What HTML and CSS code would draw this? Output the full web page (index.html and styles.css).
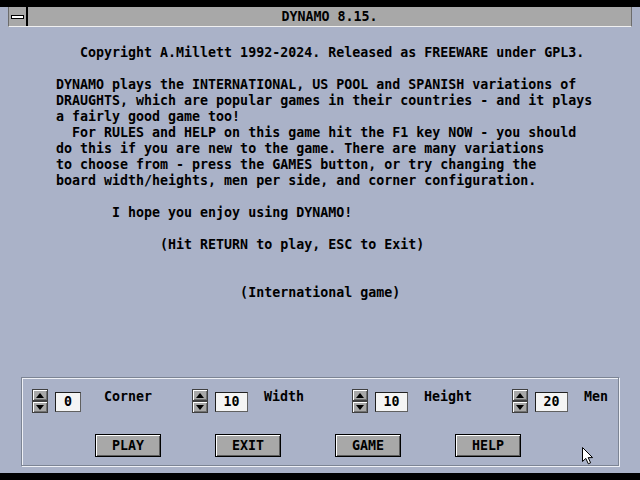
FILE: index.html
```html
<!DOCTYPE html>
<html>
<head>
<meta charset="utf-8">
<link rel="stylesheet" href="styles.css">
</head>
<body>
<div class="screen">
  <div class="titlebar">
    <div class="sysmenu"><span class="sysbar"></span></div>
    <div class="title">DYNAMO 8.15.</div>
  </div>
<pre class="intro">   Copyright A.Millett 1992-2024. Released as FREEWARE under GPL3.

DYNAMO plays the INTERNATIONAL, US POOL and SPANISH variations of
DRAUGHTS, which are popular games in their countries - and it plays
a fairly good game too!
  For RULES and HELP on this game hit the F1 key NOW - you should
do this if you are new to the game. There are many variations
to choose from - press the GAMES button, or try changing the
board width/heights, men per side, and corner configuration.

       I hope you enjoy using DYNAMO!

             (Hit RETURN to play, ESC to Exit)


                       (International game)</pre>
  <div class="panel">
    <div class="controls">
      <div class="ctl">
        <div class="spin">
          <div class="arrow"><svg width="8" height="5" viewBox="0 0 8 5"><path d="M0 5 L4 0 L8 5 Z"/></svg></div>
          <div class="arrow"><svg width="8" height="5" viewBox="0 0 8 5"><path d="M0 0 L8 0 L4 5 Z"/></svg></div>
        </div>
        <div class="val narrow">0</div>
        <span class="lbl">Corner</span>
      </div>
      <div class="ctl">
        <div class="spin">
          <div class="arrow"><svg width="8" height="5" viewBox="0 0 8 5"><path d="M0 5 L4 0 L8 5 Z"/></svg></div>
          <div class="arrow"><svg width="8" height="5" viewBox="0 0 8 5"><path d="M0 0 L8 0 L4 5 Z"/></svg></div>
        </div>
        <div class="val">10</div>
        <span class="lbl">Width</span>
      </div>
      <div class="ctl">
        <div class="spin">
          <div class="arrow"><svg width="8" height="5" viewBox="0 0 8 5"><path d="M0 5 L4 0 L8 5 Z"/></svg></div>
          <div class="arrow"><svg width="8" height="5" viewBox="0 0 8 5"><path d="M0 0 L8 0 L4 5 Z"/></svg></div>
        </div>
        <div class="val">10</div>
        <span class="lbl">Height</span>
      </div>
      <div class="ctl last">
        <div class="spin">
          <div class="arrow"><svg width="8" height="5" viewBox="0 0 8 5"><path d="M0 5 L4 0 L8 5 Z"/></svg></div>
          <div class="arrow"><svg width="8" height="5" viewBox="0 0 8 5"><path d="M0 0 L8 0 L4 5 Z"/></svg></div>
        </div>
        <div class="val">20</div>
        <span class="lbl">Men</span>
      </div>
    </div>
    <div class="buttons">
      <div class="btn">PLAY</div>
      <div class="btn">EXIT</div>
      <div class="btn">GAME</div>
      <div class="btn">HELP</div>
    </div>
  </div>
  <svg class="cursor" width="12" height="18" viewBox="0 0 12 18"><path d="M0.5 0.5 L0.5 14.5 L3.8 11.4 L6.3 16.8 L8.6 15.8 L6.2 10.6 L10.6 10.6 Z" fill="#fff" stroke="#000" stroke-width="1"/></svg>
</div>
</body>
</html>
```

FILE: styles.css
```css
html, body {
  margin: 0;
  padding: 0;
  background: #000;
  height: 480px;
  overflow: hidden;
}

body {
  font-family: "DejaVu Sans Mono", "Liberation Mono", monospace;
  font-size: 13.3px;
  font-weight: bold;
  color: #000;
}

.screen {
  position: relative;
  margin-top: 7px;
  height: 466px;
  background: #aab2c8;
}

.titlebar {
  margin: 0 8px;
  height: 19px;
  display: flex;
  background: #a8a8a8;
  border-left: 1px solid #6c6c6c;
  border-right: 1px solid #6c6c6c;
  border-bottom: 1px solid #f0f0f0;
}

.sysmenu {
  width: 17px;
  border-right: 2px solid #000;
  display: flex;
  align-items: center;
  justify-content: center;
}

.sysbar {
  width: 11px;
  height: 2px;
  background: #fff;
  border: 1px solid #000;
}

.title {
  flex: 1;
  text-align: center;
  line-height: 19px;
}

.intro {
  margin: 18px 0 0 56px;
  font: inherit;
  line-height: 16px;
  height: 256px;
}

.panel {
  margin: 76px 0 0 21px;
  width: 598px;
  height: 89px;
  box-sizing: border-box;
  border: 1px solid #7c8494;
  box-shadow: inset 1px 1px 0 #eef0f6, 1px 1px 0 #eef0f6;
}

.controls {
  display: flex;
  padding: 11px 0 0 10px;
}

.ctl {
  flex: none;
  width: 160px;
  display: grid;
  grid-template-columns: 16px 56px auto;
  align-items: start;
}

.ctl.last {
  width: 100px;
}

.spin {
  display: flex;
  flex-direction: column;
}

.arrow {
  height: 12px;
  box-sizing: border-box;
  background: #a8a8a8;
  border: 1px solid #404040;
  box-shadow: inset 1px 1px 0 #fff, inset -1px -1px 0 #707070;
  display: flex;
  align-items: center;
  justify-content: center;
}

.arrow svg {
  display: block;
}

.val {
  margin: 3px 0 0 7px;
  width: 33px;
  height: 20px;
  box-sizing: border-box;
  border: 1px solid #202020;
  border-right-color: #606060;
  border-bottom-color: #606060;
  background: #f4f4f4;
  text-align: center;
  line-height: 18px;
}

.val.narrow {
  width: 26px;
}

.lbl {
  line-height: 16px;
}

.buttons {
  display: flex;
  gap: 54px;
  padding-left: 73px;
  margin-top: 21px;
}

.btn {
  width: 66px;
  height: 23px;
  box-sizing: border-box;
  border: 1px solid #000;
  background: #a8a8a8;
  box-shadow: inset 1px 1px 0 #fff, inset -1px -1px 0 #5c5c5c;
  text-align: center;
  line-height: 21px;
}

.cursor {
  position: absolute;
  left: 582px;
  top: 440px;
}
```
